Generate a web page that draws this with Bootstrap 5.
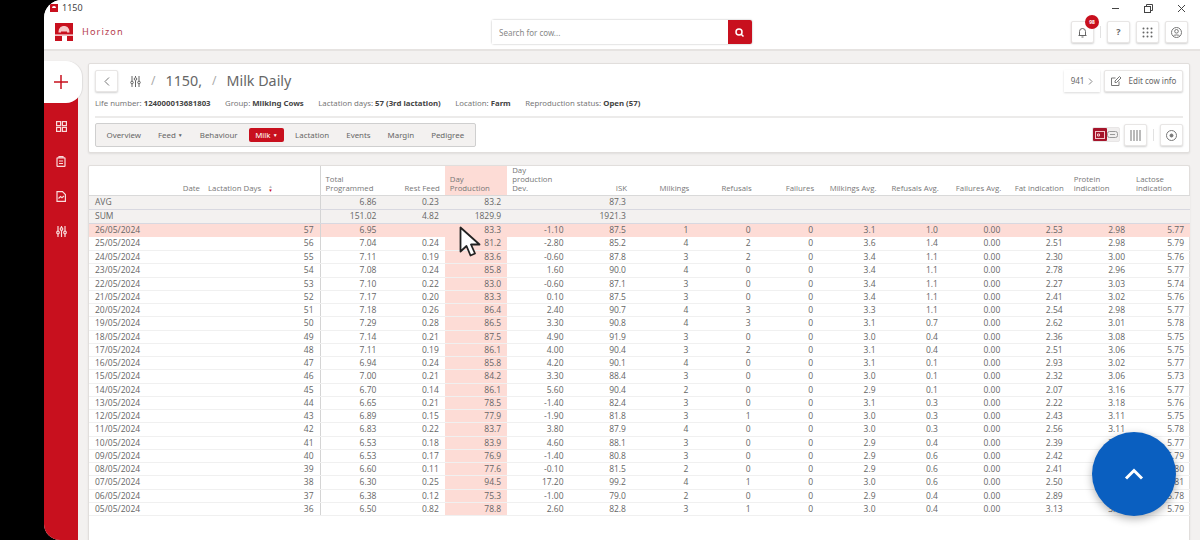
<!DOCTYPE html>
<html lang="en">
<head>
  <meta charset="UTF-8">
  <meta name="viewport" content="width=device-width, initial-scale=1.0">
  <title>1150 - Milk Daily</title>
  <link href="https://cdn.jsdelivr.net/npm/bootstrap@5.3.3/dist/css/bootstrap.min.css" rel="stylesheet">
  <style>
    html, body { height: 540px; overflow: hidden; background: #000; }
    body { font-family: "Noto Sans", "Open Sans", sans-serif; color: #666; font-size: 9px; }
    .app-win { margin-left: 44px; height: 540px; background: #f3f1f0; border-radius: 18px 0 0 16px; overflow: hidden; position: relative; }
    .title-bar { height: 15px; flex: none; background: #fff; padding: 1px 2px 0 6px; font-size: 9px; color: #444; line-height: 14px; }
    .win-ctl { width: 33px; text-align: center; }
    .top-head { height: 36px; flex: none; background: #fff; border-bottom: 2px solid #e6e3e1; padding-right: 12px; }
    .brand-zone { width: 448px; padding-left: 11px; }
    .brand-name { color: #b5404f; font-size: 9.2px; letter-spacing: 1.1px; margin-left: 9px; }
    .search-box { width: 260px; height: 24px; background: #fff; border-radius: 2px; box-shadow: 0 0 2px rgba(0,0,0,.35); }
    .search-box input { font-size: 8px; padding: 0 7px; height: 24px; border: 0; border-radius: 0; color: #777; }
    .search-box input::placeholder { color: #888; }
    .search-go { width: 25px; height: 24px; background: #c8101e; border-radius: 0 2px 2px 0; }
    .tool-row { gap: 6px; }
    .tool-btn { width: 23px; height: 22px; padding: 0; background: #fff; border: 1px solid #e8e6e5; border-radius: 2px; box-shadow: 0 1px 2px rgba(0,0,0,.18); color: #666; font-size: 9px; font-weight: 700; line-height: 20px; }
    .bell-badge { top: 0; left: 20px; transform: translate(-50%, -50%); width: 14px; height: 14px; padding: 0; background: #c8101e; font-size: 5px; line-height: 14px; }
    .v-sep { width: 1px; height: 12px; background: #e2e2e2; }
    .side-col { width: 34px; flex: none; padding-top: 10px; }
    .plus-tab { width: 38px; height: 42px; padding-right: 5px; background: #fff; border-radius: 0 16px 16px 0; position: relative; z-index: 1; margin-bottom: -12px; box-shadow: 1px 0 1px rgba(0,0,0,.08); }
    .side-red { height: 470px; background: #c8101e; padding-top: 30px; gap: 24px; }
    .content-col { padding: 12px 10px 0 10px; min-width: 0; }
    .head-card, .table-card { border: 1px solid #e1dedc; border-radius: 2px; box-shadow: 0 1px 2px rgba(0,0,0,.08); }
    .head-card { height: 90px; padding: 6px 6px 0 6px; }
    .page-row { height: 22px; }
    .crumb-sep { color: #aaa; font-size: 12px; margin: 0 10px; }
    .crumb-txt { font-size: 14.3px; color: #666; line-height: 22px; }
    .back-btn { margin-right: 12px; }
    .info-row { height: 24px; font-size: 7.8px; color: #777; }
    .info-row b { color: #444; font-weight: 700; }
    .info-row span { margin-right: 14.500px; }
    .card-rule { height: 2px; background: #ecebea; margin-bottom: 4px; }
    .nav-row { height: 25px; }
    .tab-box { height: 24px; background: #f3f1f0; border: 1px solid #cfcfcf; border-radius: 2px; padding: 0 2px; }
    .tab-box .nav-link { color: #666; padding: 0 8.500px; font-size: 7.9px; line-height: 22px; }
    .tab-box .nav-link.active { background: #c8101e; color: #fff; height: 14px; line-height: 14px; padding: 0 6px; margin: 0 3px; border-radius: 2px; }
    .caret-dn { font-size: 5px; vertical-align: 1px; }
    .view-toggle { height: 15px; width: 28px; background: #f0eeee; border: 1px solid #e8e6e6; border-radius: 2px; margin-right: -2px; }
    .view-on { width: 14px; height: 13px; background: #a5142a; border-radius: 1px; }
    .count-btn { width: 36px; height: 22px; background: #fff; box-shadow: 0 1px 2px rgba(0,0,0,.15); font-size: 8px; color: #666; }
    .edit-btn { width: 79px; height: 22px; padding: 0; background: #fff; border: 1px solid #e8e6e5; border-radius: 2px; box-shadow: 0 1px 2px rgba(0,0,0,.18); font-size: 8px; color: #666; }
    .table-card { margin-top: 12px; height: 390px; border-bottom: 0; }
    .milk-tbl { table-layout: fixed; width: 1100px; margin: 0; font-family: "Open Sans", sans-serif; font-size: 8.5px; color: #666; border-collapse: collapse; }
    .milk-tbl.table>:not(caption)>*>* { padding: 0 6px 0 5px; height: 13.25px; line-height: 12px; text-align: right; color: #666; background: transparent; box-shadow: none; border-bottom: 1px solid #f0f0f0; }
    .milk-tbl.table>thead>tr>th { height: 29px; vertical-align: bottom; font-weight: 400; font-size: 7.8px; line-height: 8.8px; padding-bottom: 2px; padding-right: 5px; color: #777; border-bottom: 1px solid #d9d9d9; }
    .milk-tbl.table>thead>tr>th.hd-wrap { text-align: left; }
    .milk-tbl.table>thead>tr>th.hd-days { padding-left: 3px; }
    .milk-tbl.table>tbody>tr>td.cell-date { text-align: left; padding-left: 6px; }
    .milk-tbl.table>*>tr>.col-split { border-right: 1px solid #d4d4d4; }
    .milk-tbl.table>tbody>tr.row-total>td { height: 14px; background: #f3f1f0; border-bottom: 1px solid #d8d8e0; }
    .milk-tbl.table>tbody>tr.row-today>td { height: 14.3px; background: #fddcd6; border-bottom: 0; }
    .milk-tbl.table>*>tr>.col-hot { background: #fddcd6; }
    .sort-mark { display: inline-flex; flex-direction: column; height: 8px; margin-left: 5px; font-size: 4.5px; line-height: 4px; vertical-align: top; color: #c8101e; }
    .sort-mark i { color: #bbb; font-style: normal; }
    .scroll-top { width: 84px; height: 84px; right: 24px; bottom: 24px; background: #0a5fc0; box-shadow: 0 3px 8px rgba(0,0,0,.3); padding: 0; border: 0; z-index: 3; }
    .mouse-ptr { left: 415px; top: 226px; z-index: 2; }
  </style>
</head>
<body>
  <div class="app-win d-flex flex-column">
    <div class="title-bar d-flex align-items-center">
      <svg width="8" height="8" viewBox="0 0 8 8" class="me-1"><rect width="8" height="8" fill="#c8101e"/><path d="M2 4a2 2 0 0 1 4 0z" fill="#fff"/></svg>
      <span>1150</span>
      <div class="ms-auto d-flex align-items-center">
        <div class="win-ctl"><svg width="9" height="9" viewBox="0 0 9 9"><path d="M1 4.5h7" stroke="#444" fill="none"/></svg></div>
        <div class="win-ctl"><svg width="9" height="9" viewBox="0 0 9 9" fill="none" stroke="#444"><rect x=".5" y="2.5" width="6" height="6"/><path d="M2.5 2.5v-2h6v6h-2"/></svg></div>
        <div class="win-ctl"><svg width="9" height="9" viewBox="0 0 9 9"><path d="M1 1l7 7M8 1l-7 7" stroke="#444" fill="none"/></svg></div>
      </div>
    </div>

    <div class="top-head d-flex align-items-center">
      <div class="brand-zone d-flex align-items-center">
        <svg width="18" height="18" viewBox="0 0 18 18">
          <rect width="18" height="18" fill="#c8101e"/>
          <path d="M3.5 9.5C3.5 5 6 3 9 3s5.500 2 5.500 6.500z" fill="#f6c9c9"/>
          <path d="M6 8.500h6v2.500H6z" fill="#c8101e"/>
          <path d="M0 11.500h18v1.300H0zM7 13h5v5H7z" fill="#fff"/>
        </svg>
        <span class="brand-name">Horizon</span>
      </div>
      <div class="search-box input-group flex-nowrap">
        <input type="text" class="form-control shadow-none" placeholder="Search for cow...">
        <div class="search-go d-flex align-items-center justify-content-center">
          <svg width="9" height="9" viewBox="0 0 9 9" fill="none" stroke="#fff" stroke-width="1.500"><circle cx="4" cy="4" r="3"/><path d="M6.200 6.200L8.500 8.500"/></svg>
        </div>
      </div>
      <div class="ms-auto d-flex align-items-center tool-row">
        <button class="tool-btn position-relative" type="button">
          <svg width="9" height="11" viewBox="0 0 9 11" fill="none" stroke="#666"><path d="M1.500 8.500V4.500a3 3 0 0 1 6 0v4zM.5 8.500h8M3.500 10h2"/></svg>
          <span class="badge rounded-pill position-absolute bell-badge">98</span>
        </button>
        <div class="v-sep"></div>
        <button class="tool-btn" type="button">?</button>
        <button class="tool-btn" type="button">
          <svg width="11" height="11" viewBox="0 0 11 11" fill="#666"><circle cx="1.500" cy="1.500" r="1"/><circle cx="5.500" cy="1.500" r="1"/><circle cx="9.500" cy="1.500" r="1"/><circle cx="1.500" cy="5.500" r="1"/><circle cx="5.500" cy="5.500" r="1"/><circle cx="9.500" cy="5.500" r="1"/><circle cx="1.500" cy="9.500" r="1"/><circle cx="5.500" cy="9.500" r="1"/><circle cx="9.500" cy="9.500" r="1"/></svg>
        </button>
        <button class="tool-btn" type="button">
          <svg width="11" height="11" viewBox="0 0 11 11" fill="none" stroke="#777"><circle cx="5.500" cy="5.500" r="5"/><circle cx="5.500" cy="4.300" r="1.800"/><path d="M2.300 9.200c.6-1.700 5.800-1.700 6.400 0"/></svg>
        </button>
      </div>
    </div>

    <div class="d-flex flex-grow-1">
      <div class="side-col">
        <div class="plus-tab d-flex align-items-center justify-content-center">
          <svg width="16" height="16" viewBox="0 0 16 16"><path d="M8 1v14M1 8h14" stroke="#c8101e" stroke-width="1.500" fill="none"/></svg>
        </div>
        <div class="side-red d-flex flex-column align-items-center">
          <svg width="11" height="11" viewBox="0 0 11 11" fill="none" stroke="#f8dcdc" stroke-width="1.200"><rect x=".6" y=".6" width="4" height="4"/><rect x="6.400" y=".6" width="4" height="4"/><rect x=".6" y="6.400" width="4" height="4"/><rect x="6.400" y="6.400" width="4" height="4"/></svg>
          <svg width="10" height="11" viewBox="0 0 10 11" fill="none" stroke="#f8dcdc" stroke-width="1.200"><rect x="1" y="1.800" width="8" height="8.600" rx=".5"/><path d="M3 1.800V.7h4v1.100M3 5h4M3 7.500h4"/></svg>
          <svg width="10" height="11" viewBox="0 0 10 11" fill="none" stroke="#f8dcdc" stroke-width="1.200"><path d="M1 .6h5.500L9.400 3.500v6.900H1z"/><path d="M2.500 7.500l2-2 1.500 1.300L8 5"/></svg>
          <svg width="11" height="11" viewBox="0 0 11 11" fill="none" stroke="#f8dcdc" stroke-width="1.200"><path d="M2 0v5M2 8v3M5.500 0v1.500M5.500 4.500V11M9 0v5M9 8v3"/><circle cx="2" cy="6.500" r="1.300"/><circle cx="5.500" cy="3" r="1.300"/><circle cx="9" cy="6.500" r="1.300"/></svg>
        </div>
      </div>

      <div class="content-col flex-grow-1">
        <div class="card head-card">
          <div class="page-row d-flex align-items-center">
            <button class="tool-btn back-btn" type="button">
              <svg width="6" height="9" viewBox="0 0 6 9" fill="none" stroke="#777"><path d="M5 .5L1 4.500l4 4"/></svg>
            </button>
            <svg width="11" height="11" viewBox="0 0 11 11" fill="none" stroke="#666"><path d="M2 0v5M2 8v3M5.500 0v1.500M5.500 4.500V11M9 0v5M9 8v3"/><circle cx="2" cy="6.500" r="1.300"/><circle cx="5.500" cy="3" r="1.300"/><circle cx="9" cy="6.500" r="1.300"/></svg>
            <span class="crumb-sep">/</span>
            <span class="crumb-txt">1150,</span>
            <span class="crumb-sep">/</span>
            <span class="crumb-txt">Milk Daily</span>
            <div class="count-btn ms-auto d-flex align-items-center justify-content-center gap-1">941
              <svg width="5" height="7" viewBox="0 0 5 7" fill="none" stroke="#888"><path d="M1 .5l3 3-3 3"/></svg>
            </div>
            <button class="edit-btn ms-1 d-flex align-items-center justify-content-center gap-2" type="button">
              <svg width="10" height="10" viewBox="0 0 10 10" fill="none" stroke="#777"><path d="M8 5.500v4H.5V2h4M4 6.500V5l4.500-4.500L10 2 5.500 6.500z"/></svg>
              Edit cow info
            </button>
          </div>
          <div class="info-row d-flex align-items-center">
            <span>Life number: <b>124000013681803</b></span>
            <span>Group: <b>Milking Cows</b></span>
            <span>Lactation days: <b>57 (3rd lactation)</b></span>
            <span>Location: <b>Farm</b></span>
            <span>Reproduction status: <b>Open (57)</b></span>
          </div>
          <div class="card-rule"></div>
          <div class="nav-row d-flex align-items-center">
            <ul class="nav tab-box align-items-center">
              <li class="nav-item"><a class="nav-link" href="#">Overview</a></li>
              <li class="nav-item"><a class="nav-link" href="#">Feed <span class="caret-dn">&#9660;</span></a></li>
              <li class="nav-item"><a class="nav-link" href="#">Behaviour</a></li>
              <li class="nav-item"><a class="nav-link active" href="#">Milk <span class="caret-dn">&#9660;</span></a></li>
              <li class="nav-item"><a class="nav-link" href="#">Lactation</a></li>
              <li class="nav-item"><a class="nav-link" href="#">Events</a></li>
              <li class="nav-item"><a class="nav-link" href="#">Margin</a></li>
              <li class="nav-item"><a class="nav-link" href="#">Pedigree</a></li>
            </ul>
            <div class="ms-auto d-flex align-items-center tool-row">
              <div class="view-toggle d-flex align-items-center">
                <div class="view-on d-flex align-items-center justify-content-center">
                  <svg width="10" height="8" viewBox="0 0 10 8" fill="none" stroke="#f3c6cc"><rect x=".5" y=".5" width="9" height="7"/><path d="M2.500 3h2v2h-2z"/></svg>
                </div>
                <svg width="11" height="7" viewBox="0 0 11 7" fill="none" stroke="#999"><rect x=".5" y=".5" width="10" height="6" rx="2"/><path d="M3 3.500h5"/></svg>
              </div>
              <button class="tool-btn" type="button">
                <svg width="11" height="11" viewBox="0 0 11 11" stroke="#777"><path d="M1 0v11M4 0v11M7 0v11M10 0v11"/></svg>
              </button>
              <div class="v-sep"></div>
              <button class="tool-btn" type="button">
                <svg width="11" height="11" viewBox="0 0 11 11" fill="none" stroke="#777"><circle cx="5.500" cy="5.500" r="5"/><circle cx="5.500" cy="5.500" r="1.500" fill="#777"/></svg>
              </button>
            </div>
          </div>
        </div>

        <div class="card table-card">
          <table class="table milk-tbl">
            <colgroup id="milk-cols"></colgroup>
            <thead>
              <tr>
                <th>Date</th>
                <th class="hd-wrap hd-days col-split">Lactation Days <span class="sort-mark"><i>&#9650;</i>&#9660;</span></th>
                <th class="hd-wrap">Total Programmed</th>
                <th>Rest Feed</th>
                <th class="hd-wrap col-hot">Day Production</th>
                <th class="hd-wrap">Day production Dev.</th>
                <th>ISK</th>
                <th>Milkings</th>
                <th>Refusals</th>
                <th>Failures</th>
                <th>Milkings Avg.</th>
                <th>Refusals Avg.</th>
                <th>Failures Avg.</th>
                <th>Fat indication</th>
                <th class="hd-wrap">Protein indication</th>
                <th class="hd-wrap">Lactose indication</th>
              </tr>
            </thead>
            <tbody id="milk-rows"></tbody>
          </table>
        </div>
      </div>
    </div>

    <button class="scroll-top btn rounded-circle position-absolute d-flex align-items-center justify-content-center" type="button">
      <svg width="20" height="12" viewBox="0 0 20 12" fill="none" stroke="#fff" stroke-width="3"><path d="M2 10.500l8-8 8 8"/></svg>
    </button>
    <svg class="mouse-ptr position-absolute" width="22" height="32" viewBox="0 0 22 32">
      <path d="M1.500 1.500v24l6-5.500 4 9.500 4.500-2-4-9h8.500z" fill="#fff" stroke="#222" stroke-width="1.800" stroke-linejoin="round"/>
    </svg>
  </div>

  <script>
    const cols = [116, 115].concat(Array(13).fill(62.4), [59]);
    document.getElementById('milk-cols').innerHTML = cols.map(w => `<col style="width:${w}px">`).join('');

    const rows = [
      ['26/05/2024',57,'6.95','','83.3','-1.10','87.5',1,0,0,'3.1','1.0','0.00','2.53','2.98','5.77'],
      ['25/05/2024',56,'7.04','0.24','81.2','-2.80','85.2',4,2,0,'3.6','1.4','0.00','2.51','2.98','5.79'],
      ['24/05/2024',55,'7.11','0.19','83.6','-0.60','87.8',3,2,0,'3.4','1.1','0.00','2.30','3.00','5.76'],
      ['23/05/2024',54,'7.08','0.24','85.8','1.60','90.0',4,0,0,'3.4','1.1','0.00','2.78','2.96','5.77'],
      ['22/05/2024',53,'7.10','0.22','83.0','-0.60','87.1',3,0,0,'3.4','1.1','0.00','2.27','3.03','5.74'],
      ['21/05/2024',52,'7.17','0.20','83.3','0.10','87.5',3,0,0,'3.4','1.1','0.00','2.41','3.02','5.76'],
      ['20/05/2024',51,'7.18','0.26','86.4','2.40','90.7',4,3,0,'3.3','1.1','0.00','2.54','2.98','5.77'],
      ['19/05/2024',50,'7.29','0.28','86.5','3.30','90.8',4,3,0,'3.1','0.7','0.00','2.62','3.01','5.78'],
      ['18/05/2024',49,'7.14','0.21','87.5','4.90','91.9',3,0,0,'3.0','0.4','0.00','2.36','3.08','5.75'],
      ['17/05/2024',48,'7.11','0.19','86.1','4.00','90.4',3,2,0,'3.1','0.4','0.00','2.51','3.06','5.75'],
      ['16/05/2024',47,'6.94','0.24','85.8','4.20','90.1',4,0,0,'3.1','0.1','0.00','2.93','3.02','5.77'],
      ['15/05/2024',46,'7.00','0.21','84.2','3.30','88.4',3,0,0,'3.0','0.1','0.00','2.32','3.06','5.73'],
      ['14/05/2024',45,'6.70','0.14','86.1','5.60','90.4',2,0,0,'2.9','0.1','0.00','2.07','3.16','5.77'],
      ['13/05/2024',44,'6.65','0.21','78.5','-1.40','82.4',3,0,0,'3.1','0.3','0.00','2.22','3.18','5.76'],
      ['12/05/2024',43,'6.89','0.15','77.9','-1.90','81.8',3,1,0,'3.0','0.3','0.00','2.43','3.11','5.75'],
      ['11/05/2024',42,'6.83','0.22','83.7','3.80','87.9',4,0,0,'3.0','0.3','0.00','2.56','3.11','5.78'],
      ['10/05/2024',41,'6.53','0.18','83.9','4.60','88.1',3,0,0,'2.9','0.4','0.00','2.39','3.10','5.77'],
      ['09/05/2024',40,'6.53','0.17','76.9','-1.40','80.8',3,0,0,'2.9','0.6','0.00','2.42','3.10','5.79'],
      ['08/05/2024',39,'6.60','0.11','77.6','-0.10','81.5',2,0,0,'2.9','0.6','0.00','2.41','3.10','5.80'],
      ['07/05/2024',38,'6.30','0.25','94.5','17.20','99.2',4,1,0,'3.0','0.6','0.00','2.50','3.10','5.81'],
      ['06/05/2024',37,'6.38','0.12','75.3','-1.00','79.0',2,0,0,'2.9','0.4','0.00','2.89','3.10','5.78'],
      ['05/05/2024',36,'6.50','0.82','78.8','2.60','82.8',3,1,0,'3.0','0.4','0.00','3.13','3.10','5.79']
    ];

    const cell = (v, i) => {
      const cls = i === 0 ? 'cell-date' : i === 1 ? 'col-split' : i === 4 ? 'col-hot' : '';
      return `<td class="${cls}">${v}</td>`;
    };
    const total = (label, vals) => `<tr class="row-total"><td class="cell-date">${label}</td>` +
      `<td class="col-split"></td><td>${vals[0]}</td><td>${vals[1]}</td><td class="col-hot">${vals[2]}</td><td></td><td>${vals[3]}</td>` +
      `<td colspan="9"></td></tr>`;

    document.getElementById('milk-rows').innerHTML =
      total('AVG', ['6.86', '0.23', '83.2', '87.3']) +
      total('SUM', ['151.02', '4.82', '1829.9', '1921.3']) +
      rows.map((r, n) => `<tr class="${n === 0 ? 'row-today' : ''}">${r.map(cell).join('')}</tr>`).join('');
  </script>
  <script src="https://cdn.jsdelivr.net/npm/bootstrap@5.3.3/dist/js/bootstrap.bundle.min.js"></script>
</body>
</html>
